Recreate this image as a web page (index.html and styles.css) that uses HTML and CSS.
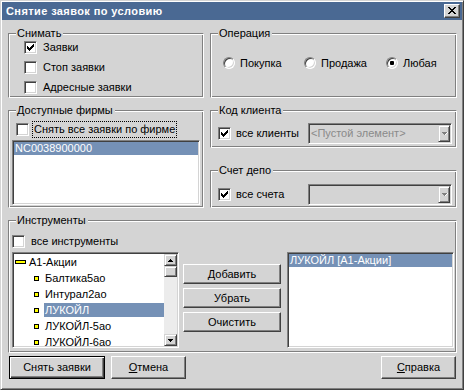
FILE: index.html
```html
<!DOCTYPE html>
<html lang="ru">
<head>
<meta charset="utf-8">
<title>Снятие заявок по условию</title>
<link rel="stylesheet" href="styles.css">
</head>
<body>
<div class="window">
  <div class="titlebar">
    <span class="title">Снятие заявок по условию</span>
    <span class="close">
      <svg width="14" height="12" viewBox="0 0 14 12"><path d="M3 2h2v1H3zM9 2h2v1H9zM4 3h2v1H4zM8 3h2v1H8zM5 4h4v1H5zM6 5h2v1H6zM5 6h4v1H5zM4 7h2v1H4zM8 7h2v1H8zM3 8h2v1H3zM9 8h2v1H9z" fill="#000"/></svg>
    </span>
  </div>
  <div class="content">
    <div class="row row1">
      <div class="group g-snimat">
        <span class="gtitle">Снимать</span>
        <div class="check-list">
          <div class="chk"><span class="box"><svg width="11" height="11" viewBox="0 0 11 11"><path d="M8 2h1v1H8zM7 3h2v1H7zM2 4h1v1H2zM6 4h3v1H6zM2 5h2v1H2zM5 5h3v1H5zM2 6h5v1H2zM3 7h3v1H3zM4 8h1v1H4z" fill="#000"/></svg></span><span>Заявки</span></div>
          <div class="chk"><span class="box"></span><span>Стоп заявки</span></div>
          <div class="chk"><span class="box"></span><span>Адресные заявки</span></div>
        </div>
      </div>
      <div class="group g-oper">
        <span class="gtitle">Операция</span>
        <div class="radios">
          <div class="radio"><span class="rbox"></span><span>Покупка</span></div>
          <div class="radio"><span class="rbox"></span><span>Продажа</span></div>
          <div class="radio"><span class="rbox on"><span class="dot"></span></span><span>Любая</span></div>
        </div>
      </div>
    </div>

    <div class="row row2">
      <div class="group g-firms">
        <span class="gtitle">Доступные фирмы</span>
        <div class="firm-check"><span class="box"></span><span class="focus">Снять все заявки по фирме</span></div>
        <div class="listbox firms-list">
          <div class="litem sel">NC0038900000</div>
        </div>
      </div>
      <div class="col-right">
        <div class="group g-client">
          <span class="gtitle">Код клиента</span>
          <div class="combo-row">
            <span class="box"><svg width="11" height="11" viewBox="0 0 11 11"><path d="M8 2h1v1H8zM7 3h2v1H7zM2 4h1v1H2zM6 4h3v1H6zM2 5h2v1H2zM5 5h3v1H5zM2 6h5v1H2zM3 7h3v1H3zM4 8h1v1H4z" fill="#000"/></svg></span>
            <span class="combo-label">все клиенты</span>
            <div class="combo"><span class="combo-text">&lt;Пустой элемент&gt;</span><span class="combo-btn"><svg width="6" height="4" viewBox="0 0 6 4"><path d="M3 1h1v1H3zM2 0h3v1H2zM1 -1h5v1H1z" fill="#fff" transform="translate(0,1)"/><path d="M2 2h1v1H2zM1 1h3v1H1zM0 0h5v1H0z" fill="#808080"/></svg></span></div>
          </div>
        </div>
        <div class="group g-depo">
          <span class="gtitle">Счет депо</span>
          <div class="combo-row">
            <span class="box"><svg width="11" height="11" viewBox="0 0 11 11"><path d="M8 2h1v1H8zM7 3h2v1H7zM2 4h1v1H2zM6 4h3v1H6zM2 5h2v1H2zM5 5h3v1H5zM2 6h5v1H2zM3 7h3v1H3zM4 8h1v1H4z" fill="#000"/></svg></span>
            <span class="combo-label">все счета</span>
            <div class="combo"><span class="combo-text"></span><span class="combo-btn"><svg width="6" height="4" viewBox="0 0 6 4"><path d="M3 1h1v1H3zM2 0h3v1H2zM1 -1h5v1H1z" fill="#fff" transform="translate(0,1)"/><path d="M2 2h1v1H2zM1 1h3v1H1zM0 0h5v1H0z" fill="#808080"/></svg></span></div>
          </div>
        </div>
      </div>
    </div>

    <div class="group g-instr">
      <span class="gtitle">Инструменты</span>
      <div class="chk instr-check"><span class="box"></span><span>все инструменты</span></div>
      <div class="instr-row">
        <div class="listbox tree">
          <div class="tree-items">
            <div class="trow"><span class="dash"></span><span class="tlabel">А1-Акции</span></div>
            <div class="trow"><span class="sq"></span><span class="tlabel">Балтика5ао</span></div>
            <div class="trow"><span class="sq"></span><span class="tlabel">Интурал2ао</span></div>
            <div class="trow"><span class="sq"></span><span class="tlabel sel">ЛУКОЙЛ</span></div>
            <div class="trow"><span class="sq"></span><span class="tlabel">ЛУКОЙЛ-5ао</span></div>
            <div class="trow"><span class="sq"></span><span class="tlabel">ЛУКОЙЛ-6ао</span></div>
          </div>
          <div class="sb">
            <span class="sb-btn"><svg width="5" height="3" viewBox="0 0 5 3"><path d="M2 0h1v1H2zM1 1h3v1H1zM0 2h5v1H0z" fill="#000"/></svg></span>
            <span class="sb-thumb"></span>
            <span class="sb-btn down"><svg width="5" height="3" viewBox="0 0 5 3"><path d="M0 0h5v1H0zM1 1h3v1H1zM2 2h1v1H2z" fill="#000"/></svg></span>
          </div>
        </div>
        <div class="mid-buttons">
          <div class="btn">Добавить</div>
          <div class="btn">Убрать</div>
          <div class="btn">Очистить</div>
        </div>
        <div class="listbox chosen">
          <div class="litem sel">ЛУКОЙЛ [А1-Акции]</div>
        </div>
      </div>
    </div>

    <div class="bottom">
      <div class="btn default">Снять заявки</div>
      <div class="btn small"><u>О</u>тмена</div>
      <div class="btn small help"><u>С</u>правка</div>
    </div>
  </div>
</div>
</body>
</html>
```
FILE: styles.css
```css
* { box-sizing: border-box; }
html, body { margin: 0; padding: 0; }
body {
  width: 464px;
  height: 390px;
  overflow: hidden;
  background: #d4d4d4;
  font-family: "Liberation Sans", Arial, sans-serif;
  font-size: 11px;
  line-height: 13px;
  color: #000;
}
.window {
  width: 464px;
  height: 390px;
  padding: 1px;
  background: #d4d4d4;
  border: 1px solid;
  border-color: #d4d4d4 #404040 #404040 #d4d4d4;
  box-shadow: inset 1px 1px #fff, inset -1px -1px #808080;
  display: flex;
  flex-direction: column;
}
.titlebar {
  height: 18px;
  flex: none;
  background: #4a6993;
  display: flex;
  align-items: center;
  padding: 0 2px 0 4px;
  color: #fff;
}
.title {
  font-weight: bold;
  font-size: 11px;
  letter-spacing: 0.4px;
}
.close {
  margin-left: auto;
  width: 16px;
  height: 14px;
  border: 1px solid;
  border-color: #fff #404040 #404040 #fff;
  box-shadow: inset -1px -1px #808080;
  background: #d4d4d4;
  display: flex;
}
.content {
  flex: 1;
  padding: 13px 5px 0 6px;
  display: flex;
  flex-direction: column;
}
.row { display: flex; gap: 6px; flex: none; }
.row1 { height: 65px; }
.row2 { height: 98px; margin-top: 12px; }

.group {
  position: relative;
  border: 1px solid;
  border-color: #808080 #fff #fff #808080;
  box-shadow: inset 1px 1px #fff, inset -1px -1px #808080;
}
.gtitle {
  position: absolute;
  top: -7px;
  left: 7px;
  padding: 0 2px 0 1px;
  background: #d4d4d4;
  line-height: 13px;
  white-space: nowrap;
}

/* checkbox */
.box {
  width: 13px;
  height: 13px;
  flex: none;
  display: block;
  background: #fff;
  border: 1px solid;
  border-color: #808080 #fff #fff #808080;
  box-shadow: inset 1px 1px #404040, inset -1px -1px #d4d4d4;
}
.box svg { display: block; }
.chk { display: flex; align-items: center; height: 13px; gap: 6px; white-space: nowrap; }

.g-snimat { width: 196px; padding: 7px 0 0 15px; }
.check-list { display: flex; flex-direction: column; gap: 7px; }

.g-oper { width: 247px; padding: 23px 0 0 12px; }
.radios { display: grid; grid-template-columns: 81px 82px auto; }
.radio { display: flex; align-items: center; gap: 5px; height: 12px; white-space: nowrap; }
.rbox {
  width: 12px;
  height: 12px;
  flex: none;
  border-radius: 50%;
  background: #fff;
  border: 1px solid;
  border-color: #808080 #fff #fff #808080;
  box-shadow: inset 1px 1px #404040, inset -1px -1px #d4d4d4;
  display: flex;
  align-items: center;
  justify-content: center;
}
.dot { width: 4px; height: 4px; border-radius: 1px; background: #000; }

.g-firms { width: 196px; padding: 10px 0 0 3px; display: flex; flex-direction: column; }
.firm-check { display: flex; align-items: center; gap: 3px; height: 17px; margin-left: 4px; white-space: nowrap; }
.focus { border: 1px dotted #000; padding: 0 1px; line-height: 15px; height: 17px; }

.listbox {
  background: #fff;
  border: 1px solid;
  border-color: #808080 #fff #fff #808080;
  box-shadow: inset 1px 1px #404040, inset -1px -1px #d4d4d4;
  padding: 1px;
  overflow: hidden;
}
.firms-list { width: 188px; height: 65px; margin-top: 2px; }
.litem { height: 13px; line-height: 13px; padding-left: 1px; white-space: nowrap; }
.litem.sel { background: #7591b6; color: #fff; }

.col-right { width: 247px; display: flex; flex-direction: column; gap: 22px; }
.g-client, .g-depo { height: 38px; padding: 12px 4px 0 7px; }
.g-depo { padding-top: 13px; }
.combo-row { display: flex; align-items: center; height: 21px; }
.combo-label { margin-left: 5px; white-space: nowrap; }
.combo {
  margin-left: auto;
  width: 144px;
  height: 21px;
  display: flex;
  border: 1px solid;
  border-color: #808080 #fff #fff #808080;
  box-shadow: inset 1px 1px #404040, inset -1px -1px #d4d4d4;
  padding: 1px;
  background: #d4d4d4;
}
.combo-text { flex: 1; color: #8a8a8a; line-height: 17px; padding-left: 1px; white-space: nowrap; overflow: hidden; }
.combo-btn {
  width: 12px;
  height: 17px;
  flex: none;
  border: 1px solid;
  border-color: #d4d4d4 #404040 #404040 #d4d4d4;
  box-shadow: inset 1px 1px #fff, inset -1px -1px #808080;
  display: flex;
  align-items: center;
  justify-content: center;
}
.combo-btn svg { display: block; margin-left: 1px; }

.g-instr { height: 133px; margin-top: 12px; padding: 14px 2px 0 3px; flex: none; display: flex; flex-direction: column; }
.instr-row { display: flex; margin-top: 4px; height: 96px; }
.tree { width: 167px; height: 96px; display: flex; }
.tree-items { flex: 1; overflow: hidden; }
.trow { height: 16px; display: flex; align-items: center; white-space: nowrap; }
.dash { width: 11px; height: 4px; margin: 0 2px 0 1px; border: 1px solid #000; background: #ff0; flex: none; }
.sq { width: 5px; height: 5px; margin: 0 5px 0 20px; border: 1px solid #000; background: #ff0; flex: none; }
.tlabel { line-height: 14px; height: 14px; padding: 0 1px; }
.tlabel.sel { flex: 1; background: #7591b6; color: #fff; }
.sb { width: 13px; flex: none; display: flex; flex-direction: column; background: #ececec; }
.sb-btn, .sb-thumb {
  flex: none;
  background: #d4d4d4;
  border: 1px solid;
  border-color: #d4d4d4 #404040 #404040 #d4d4d4;
  box-shadow: inset 1px 1px #fff, inset -1px -1px #808080;
}
.sb-btn { height: 12px; display: flex; align-items: center; justify-content: center; }
.sb-btn svg { display: block; }
.sb-thumb { height: 11px; }
.sb-btn.down { margin-top: auto; }

.mid-buttons { width: 98px; margin-left: 4px; padding-top: 12px; display: flex; flex-direction: column; gap: 4px; }
.chosen { width: 167px; height: 96px; margin-left: 6px; }

.btn {
  height: 20px;
  display: flex;
  align-items: center;
  justify-content: center;
  background: #d4d4d4;
  border: 1px solid;
  border-color: #fff #404040 #404040 #fff;
  box-shadow: inset -1px -1px #808080;
  white-space: nowrap;
}
.btn u { text-decoration: underline; text-underline-offset: 1px; }
.bottom { display: flex; gap: 6px; margin-top: 3px; padding: 0 1px; height: 23px; flex: none; }
.bottom .btn { height: 23px; }
.btn.default {
  width: 96px;
  border-color: #000;
  box-shadow: inset 1px 1px #fff, inset -1px -1px #404040, inset -2px -2px #808080;
}
.btn.small { width: 75px; }
.btn.help { margin-left: auto; }
```
